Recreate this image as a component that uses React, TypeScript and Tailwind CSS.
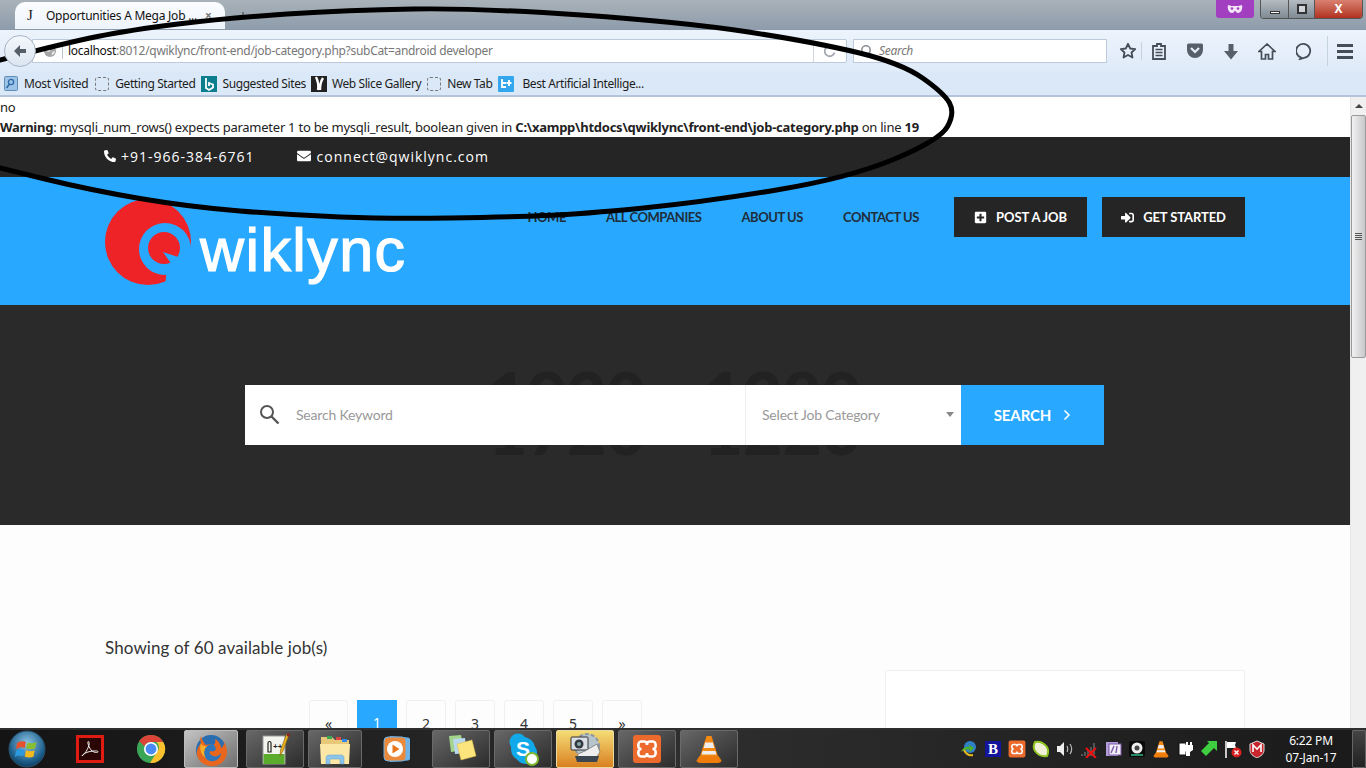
import React from "react";
import { FaPhoneAlt, FaEnvelope, FaPlusSquare, FaSignInAlt } from "react-icons/fa";

const pts: [number, number][] = [[0,60],[65,43],[130,30],[226,18],[348,10],[479,8],[683,22],[814,42],[901,63],[944,93],[955,113],[940,140],[849,178],[704,202],[583,214],[510,217],[390,219],[290,215],[190,207],[90,190],[0,168]];
function smooth(p: [number, number][]) {
  let d = `M${p[0][0]} ${p[0][1]}`;
  for (let i = 1; i < p.length - 1; i++) {
    const mx = (p[i][0] + p[i + 1][0]) / 2, my = (p[i][1] + p[i + 1][1]) / 2;
    d += ` Q${p[i][0]} ${p[i][1]} ${mx} ${my}`;
  }
  const l = p[p.length - 1];
  return d + ` L${l[0]} ${l[1]}`;
}

function Bookmark({ icon, label, className }: { icon: React.ReactNode; label: string; className?: string }) {
  return (
    <div className={"flex items-center " + (className || "gap-[6px]")}>
      {icon}
      <span className="whitespace-nowrap text-[12px] tracking-[-0.4px] text-[#1d1d1d]">{label}</span>
    </div>
  );
}
const Dashed = () => <div className="h-[14px] w-[14px] rounded-[3px] border border-dashed border-[#777]" />;

function TaskBtn({ children, active, orange, w = "w-[58px]" }: { children: React.ReactNode; active?: boolean; orange?: boolean; w?: string }) {
  const bg = active
    ? "bg-linear-to-br from-[#c4c4c4] to-[#6f6f6f] border-[#bdbdbd]"
    : orange
    ? "bg-linear-to-b from-[#f3dc74] to-[#d8801c] border-[#e9d9a0]"
    : "bg-linear-to-br from-[#686868] to-[#2c2c2c] border-[#6a6a6a]";
  return <div className={`flex h-[38px] shrink-0 items-center justify-center rounded-[2px] border ${w} ${bg}`}>{children}</div>;
}

const Vlc = ({ s = 30 }: { s?: number }) => (
  <svg className="shrink-0" width={s} height={s} viewBox="0 0 30 30">
    <path d="M12.5 2h5l7 22h-19z" fill="#f58a12" />
    <path d="M11.2 8.5h7.6l1.5 5.5H9.6zM8.6 17h12.8l1 3.4H7.6z" fill="#eee" />
    <path d="M5.5 22h19l3 4.5c0 1.5-2 2.5-3.5 2.5H6c-1.5 0-3.5-1-3.5-2.5z" fill="#ef7d0c" />
  </svg>
);
const Xampp = ({ s = 30 }: { s?: number }) => (
  <svg className="shrink-0" width={s} height={s} viewBox="0 0 30 30">
    <rect x="1" y="1" width="28" height="28" rx="3" fill="#ec6a2c" />
    <path d="M9 7.5h3.5c2 0 2.5 2.5 2.5 3.5 0-1 .5-3.5 2.5-3.5H21c2.5 0 3 3 2.5 5.5-.3 1-1 2-3 2 2 0 2.700 1 3 2 .5 2.500 0 5.500-2.500 5.500h-3.500c-2 0-2.500-2.500-2.500-3.500 0 1-.5 3.500-2.500 3.500H9c-2.500 0-3-3-2.500-5.500.3-1 1-2 3-2-2 0-2.700-1-3-2C6 10.500 6.500 7.500 9 7.500z" fill="none" stroke="#fff" strokeWidth="2.600" />
  </svg>
);

export default function App() {
  return (
    <div className="relative flex h-[768px] w-[1366px] flex-col overflow-hidden bg-white font-['Noto_Sans',sans-serif]">
      {/* Title bar */}
      <div className="flex h-[29px] shrink-0 items-start bg-linear-to-b from-[#a9b2b9] to-[#8e9cab]">
        <div className="mt-[2px] ml-[15px] flex h-[27px] w-[210px] items-center rounded-t-[10px] bg-linear-to-b from-[#fbfcfe] to-[#eef4fb] pl-[12px]">
          <span className="w-[19px] font-['Liberation_Serif',serif] text-[15px] text-[#222]">J</span>
          <span className="whitespace-nowrap text-[12px] tracking-[-0.25px] text-[#111]">Opportunities A Mega Job ...</span>
          <span className="ml-[8px] text-[12px] font-bold text-[#777]">×</span>
        </div>
        <span className="mt-[5px] ml-[14px] text-[14px] text-[#444]">+</span>
        <div className="ml-auto flex">
          <div className="flex h-[18px] w-[38px] items-center justify-center rounded-b-[3px] bg-[#a13fc0]">
            <svg width="16" height="10" viewBox="0 0 16 10"><path d="M1 1c3 1 4 1 7 1s4 0 7-1c1 4-1 8-4 8-2 0-2-2-3-2s-1 2-3 2C2 9 0 5 1 1z" fill="#f3e4f8" /><circle cx="5" cy="4.500" r="1.300" fill="#a13fc0" /><circle cx="11" cy="4.500" r="1.300" fill="#a13fc0" /></svg>
          </div>
          <div className="ml-[6px] mr-[3px] flex h-[19px] overflow-hidden rounded-b-[4px] border border-t-0 border-[#555]">
            <div className="flex w-[27px] items-end justify-center bg-linear-to-b from-[#b5bcc2] to-[#7f8a94] pb-[4px]"><div className="h-[3px] w-[10px] border border-[#333] bg-white" /></div>
            <div className="flex w-[27px] items-center justify-center border-x border-[#555] bg-linear-to-b from-[#b5bcc2] to-[#7f8a94]"><div className="h-[10px] w-[10px] border-2 border-[#333] bg-[#cfd5da]" /></div>
            <div className="flex w-[47px] items-center justify-center bg-linear-to-b from-[#d98070] to-[#b0301f] text-[12px] font-bold leading-none text-white">X</div>
          </div>
        </div>
      </div>

      {/* Nav bar */}
      <div className="flex h-[43px] shrink-0 items-center border-t border-[#8a9aab] bg-linear-to-b from-[#ecf3fc] to-[#dfeaf8] pr-[10px]">
        <div className="z-10 ml-[4px] flex h-[32px] w-[32px] shrink-0 items-center justify-center rounded-full border border-[#a8b5c4] bg-linear-to-b from-[#f4f8fc] to-[#dbe5f0]">
          <svg width="16" height="16" viewBox="0 0 16 16"><path d="M8 2L2 8l6 6V10h6V6H8z" fill="#555f69" /></svg>
        </div>
        <div className="-ml-[4px] flex h-[24px] w-[815px] items-center rounded-r-[2px] border border-[#bccada] bg-white pl-[10px]">
          <svg className="shrink-0" width="14" height="14" viewBox="0 0 14 14"><circle cx="7" cy="7" r="6" fill="#a6a6a6" /><path d="M3 4c2-2 3 0 4 1s0 3-2 3-2-3-2-4zM9 8c1-1 3-1 3 0s-2 3-3 3 0-2 0-3z" fill="#e4e4e4" /></svg>
          <div className="ml-[5px] mr-[5px] h-[16px] w-px bg-[#b9c3ce]" />
          <span className="whitespace-nowrap text-[12px] tracking-[-0.3px] text-[#777]"><span className="text-[#111]">localhost</span>:8012/qwiklync/front-end/job-category.php?subCat=android developer</span>
          <div className="ml-auto flex h-full items-center">
            <div className="h-[22px] w-px bg-[#d0d7df]" />
            <svg className="mx-[9px]" width="14" height="14" viewBox="0 0 14 14"><path d="M11.500 8.500A5 5 0 1 1 10 3.500" fill="none" stroke="#a3a9b0" strokeWidth="1.800" /><path d="M8.500 1l3.500 2.500-3 2.500z" fill="#e8e8e8" /></svg>
          </div>
        </div>
        <div className="ml-[6px] flex h-[24px] w-[254px] shrink-0 items-center border border-[#bccada] bg-white pl-[6px]">
          <svg width="14" height="14" viewBox="0 0 14 14"><circle cx="6" cy="6" r="4.200" fill="none" stroke="#8a8f95" strokeWidth="1.600" /><path d="M9 9l4 4" stroke="#8a8f95" strokeWidth="2" /></svg>
          <span className="ml-[5px] text-[12px] italic tracking-[-0.3px] text-[#777]">Search</span>
        </div>
        <div className="flex flex-1 items-center">
          <svg className="ml-[12px] shrink-0" width="18" height="18" viewBox="0 0 18 18"><path d="M9 1.800l2.200 4.700 5 .6-3.700 3.400 1 5L9 13l-4.500 2.500 1-5-3.700-3.400 5-.6z" fill="none" stroke="#444e58" strokeWidth="1.800" strokeLinejoin="round" /></svg>
          <div className="ml-[4px] h-[18px] w-px bg-[#c5d2e0]" />
          <svg className="ml-[9px] shrink-0" width="16" height="18" viewBox="0 0 16 18"><path d="M2 4h4V2h4v2h4v13H2z" fill="none" stroke="#444e58" strokeWidth="1.800" /><path d="M4.500 7.500h7M4.500 10.500h7M4.500 13.500h7" stroke="#444e58" strokeWidth="1.600" /></svg>
          <svg className="ml-[19px] shrink-0" width="18" height="16" viewBox="0 0 18 16"><path d="M1 2a1.500 1.500 0 0 1 1.500-1.500h13A1.500 1.500 0 0 1 17 2v5a8 8 0 0 1-16 0z" fill="#56606b" /><path d="M5 5l4 4 4-4" fill="none" stroke="#e6eef8" strokeWidth="2.200" /></svg>
          <svg className="ml-[20px] shrink-0" width="14" height="17" viewBox="0 0 14 17"><path d="M4.500 1h5v7H14l-7 8.500L0 8h4.500z" fill="#56606b" /></svg>
          <svg className="ml-[20px] shrink-0" width="18" height="17" viewBox="0 0 18 17"><path d="M9 1L1 8.500h2.500V16h4v-4.500h3V16h4V8.500H17z" fill="none" stroke="#444e58" strokeWidth="1.700" /></svg>
          <svg className="ml-[20px] shrink-0" width="18" height="18" viewBox="0 0 18 18"><path d="M5 15.500A7 7 0 1 1 8 15.800L4 17z" fill="none" stroke="#444e58" strokeWidth="1.800" /></svg>
          <div className="ml-[13px] h-[30px] w-px bg-[#c5d2e0]" />
          <div className="ml-[9px] flex flex-col gap-[3px]">
            <div className="h-[3px] w-[16px] bg-[#444e58]" /><div className="h-[3px] w-[16px] bg-[#444e58]" /><div className="h-[3px] w-[16px] bg-[#444e58]" />
          </div>
        </div>
      </div>

      {/* Bookmarks */}
      <div className="flex h-[25px] shrink-0 items-center border-b-2 border-[#b4c4da] bg-[#dbe8f7] pl-[4px]">
        <Bookmark icon={<svg width="14" height="15" viewBox="0 0 14 15"><rect x=".5" y=".5" width="13" height="14" rx="1" fill="#9dc3e6" stroke="#5f8db8" /><circle cx="7" cy="6" r="2.600" fill="none" stroke="#2e6aa8" strokeWidth="1.300" /><path d="M2.500 12l3-4" stroke="#2e6aa8" strokeWidth="1.500" /></svg>} label="Most Visited" />
        <div className="w-[7px]" />
        <Bookmark icon={<Dashed />} label="Getting Started" />
        <div className="w-[6px]" />
        <Bookmark className="gap-[5px]" icon={<svg width="16" height="16" viewBox="0 0 16 16"><rect width="16" height="16" fill="#0b7f8e" /><path d="M5 2v10l3 2 4-2.500V8.500L8 7v3" fill="none" stroke="#fff" strokeWidth="1.800" /></svg>} label="Suggested Sites" />
        <div className="w-[5px]" />
        <Bookmark className="gap-[5px]" icon={<svg width="16" height="16" viewBox="0 0 16 16"><rect width="16" height="16" fill="#222" /><path d="M5 1c2 4 3 7 2 13M12 2c-2 3-3 7-3 12" stroke="#fff" strokeWidth="2.400" fill="none" /></svg>} label="Web Slice Gallery" />
        <div className="w-[6px]" />
        <Bookmark icon={<Dashed />} label="New Tab" />
        <div className="w-[6px]" />
        <Bookmark className="gap-[8px]" icon={<svg width="16" height="16" viewBox="0 0 16 16"><rect width="16" height="16" rx="1" fill="#34a6ee" /><path d="M4 3v8h4M4 7h4M11 4v6M8.500 7h5" stroke="#fff" strokeWidth="1.800" fill="none" /></svg>} label="Best Artificial Intellige..." />
      </div>

      {/* Page + scrollbar */}
      <div className="flex min-h-0 flex-1">
        <div className="flex min-w-0 flex-1 flex-col overflow-hidden bg-[#fdfdfd]">
          <div className="h-[40px] shrink-0 bg-white text-[13px] leading-[20px] tracking-[-0.25px] text-[#222]">
            <div>no</div>
            <div className="whitespace-nowrap"><b>Warning</b>: mysqli_num_rows() expects parameter 1 to be mysqli_result, boolean given in <b>C:\xampp\htdocs\qwiklync\front-end\job-category.php</b> on line <b>19</b></div>
          </div>
          <div className="flex h-[40px] shrink-0 items-center bg-[#252525] pb-[2px] pl-[104px] font-['Open_Sans',sans-serif] text-[14px] tracking-[1px] text-white">
            <FaPhoneAlt className="mr-[5px] text-[12px]" />
            <span>+91-966-384-6761</span>
            <FaEnvelope className="mr-[6px] ml-[42px] text-[14px]" />
            <span>connect@qwiklync.com</span>
          </div>
          <div className="flex h-[128px] shrink-0 items-start bg-[#29a8ff] px-[105px]">
            <div className="flex items-start">
              <svg className="mt-[21px] shrink-0" width="88" height="88" viewBox="0 0 88 88">
                <circle cx="43" cy="44" r="43" fill="#ed2328" />
                <path d="M60 88h28V50L62 70z" fill="#29a8ff" />
                <circle cx="60" cy="51" r="26" fill="#29a8ff" />
                <circle cx="59" cy="50" r="16" fill="#ed2328" />
                <path d="M58 54l15 5 2 6-8 2z" fill="#29a8ff" />
              </svg>
              <span className="mt-[38px] ml-[7px] font-['Liberation_Sans',sans-serif] text-[61px] leading-[70px] tracking-[1.4px] text-white [-webkit-text-stroke:1.2px_white]">wiklync</span>
            </div>
            <div className="ml-auto flex items-center pt-[20px] font-['Lato',sans-serif] text-[13px] font-bold tracking-[-0.45px] text-[#1f2d3a]">
              <span className="pt-[2px]">HOME</span>
              <span className="ml-[40px] pt-[2px]">ALL COMPANIES</span>
              <span className="ml-[40px] pt-[2px]">ABOUT US</span>
              <span className="ml-[40px] pt-[2px]">CONTACT US</span>
              <div className="ml-[35px] flex h-[40px] w-[133px] items-center justify-center gap-[9px] bg-[#252525] tracking-[-0.1px] text-white"><FaPlusSquare className="text-[13px]" /><span className="pt-[2px]">POST A JOB</span></div>
              <div className="ml-[15px] flex h-[40px] w-[143px] items-center justify-center gap-[9px] bg-[#252525] tracking-[-0.1px] text-white"><FaSignInAlt className="text-[13px]" /><span className="pt-[2px]">GET STARTED</span></div>
            </div>
          </div>
          <div className="relative flex h-[220px] shrink-0 items-center bg-[#2a2a2a] pl-[245px]">
            <div className="absolute top-[57px] left-[488px] font-['Lato',sans-serif] text-[68px] leading-[68px] font-black whitespace-nowrap text-[#222222]">1920 - 1280</div>
            <div className="absolute top-[90px] left-[488px] font-['Lato',sans-serif] text-[68px] leading-[68px] font-black whitespace-nowrap text-[#222222]">1720 - 1220</div>
            <div className="relative flex h-[60px] w-[859px] bg-white font-['Lato',sans-serif] text-[14px] tracking-[-0.2px] text-[#999]">
              <div className="flex w-[501px] items-center border-r border-[#eeeeee] pb-[1px] pl-[14px]">
                <svg className="shrink-0" width="21" height="21" viewBox="0 0 21 21"><circle cx="8" cy="8" r="6" fill="none" stroke="#555" strokeWidth="2" /><path d="M12.500 12.500L19.500 19.500" stroke="#555" strokeWidth="2.400" /></svg>
                <span className="ml-[16px]">Search Keyword</span>
              </div>
              <div className="flex w-[215px] items-center pr-[7px] pb-[1px] pl-[16px]">
                <span>Select Job Category</span>
                <div className="ml-auto h-0 w-0 border-x-[4px] border-t-[5px] border-x-transparent border-t-[#888]" />
              </div>
              <div className="flex w-[143px] items-center justify-center gap-[12px] bg-[#29a8ff] text-[15px] font-bold tracking-[-0.1px] text-white">
                SEARCH
                <svg width="8" height="12" viewBox="0 0 8 12"><path d="M1.500 1.500L6 6l-4.500 4.500" fill="none" stroke="#fff" strokeWidth="1.500" /></svg>
              </div>
            </div>
          </div>
          <div className="flex flex-1 overflow-hidden px-[105px]">
            <div className="w-[780px] shrink-0">
              <div className="mt-[110px] font-['Lato',sans-serif] text-[17px] leading-[26px] tracking-[0.1px] text-[#333]">Showing of 60 available job(s)</div>
              <div className="mt-[39px] ml-[204px] flex gap-[9px] text-[14px] text-[#333]">
                {["«", "1", "2", "3", "4", "5", "»"].map((t) => (
                  <div key={t} className={t === "1" ? "flex h-[60px] w-[40px] shrink-0 justify-center bg-[#29a8ff] pt-[12px] text-white" : t === "«" ? "flex h-[60px] w-[39px] shrink-0 justify-center rounded-[3px] border border-[#f0f0f0] pt-[12px]" : "flex h-[60px] w-[40px] shrink-0 justify-center rounded-[3px] border border-[#f0f0f0] pt-[12px]"}>{t}</div>
                ))}
              </div>
            </div>
            <div className="mt-[145px] h-[300px] w-[360px] shrink-0 rounded-[2px] border border-[#f0f0f0] bg-white" />
          </div>
        </div>
        <div className="flex w-[16px] shrink-0 flex-col items-center border-l border-[#e5e5e5] bg-[#f0f0f0]">
          <div className="flex h-[18px] items-center justify-center"><div className="h-0 w-0 border-x-[4px] border-b-[4px] border-x-transparent border-b-[#444]" /></div>
          <div className="flex h-[243px] w-[15px] flex-col items-center justify-center gap-[1px] rounded-[2px] border border-[#9a9a9a] bg-linear-to-r from-[#f2f2f2] to-[#c8c8cc]">
            <div className="h-px w-[7px] bg-[#555]" /><div className="h-px w-[7px] bg-[#555]" /><div className="h-px w-[7px] bg-[#555]" /><div className="h-px w-[7px] bg-[#555]" />
          </div>
        </div>
      </div>

      {/* Taskbar */}
      <div className="flex h-[40px] shrink-0 items-center border-t-2 border-[#2e2e2e] bg-linear-to-r from-[#141414] via-[#2e2e2e] to-[#1a1a1a]">
        <svg className="ml-[8px] shrink-0" width="38" height="38" viewBox="0 0 38 38">
          <defs><radialGradient id="o" cx=".5" cy=".35" r=".7"><stop offset="0" stopColor="#8fc6e8" /><stop offset=".7" stopColor="#1d5f8c" /><stop offset="1" stopColor="#0d3350" /></radialGradient></defs>
          <circle cx="19" cy="19" r="18" fill="url(#o)" stroke="#29536f" />
          <path d="M9 13c3-2 6-2 9-1l-1.300 6c-3-1-5-1-8.700 1z" fill="#e5522b" />
          <path d="M19.500 12.500c3 1 6 1 9-.5l-1.500 6.500c-3 1.200-6 1-9-.3z" fill="#8bbf32" />
          <path d="M8.300 20.500c3-1.500 6-1.500 8.200-.6l-1.300 6.300c-3-1-5-1-8.500.7z" fill="#2c9ae0" />
          <path d="M18 20.300c3 1.200 6 1.200 8.700 0l-1.300 6.500c-3 1.200-6 1-8.700-.2z" fill="#f4b91c" />
        </svg>
        <div className="ml-[30px] flex h-[28px] w-[28px] shrink-0 items-center justify-center border-[3px] border-[#e01b12] bg-[#2a0605]">
          <svg width="20" height="20" viewBox="0 0 20 20"><path d="M2 17c3-2 6-7 7-11 .4-2 0-4-.8-3.500C7 3 9 9 12 12c2 1.500 6 2 6 .8 0-1.500-6-1-10 .2-3 1-6 3-6 4z" fill="none" stroke="#eee" strokeWidth="1" /></svg>
        </div>
        <svg className="ml-[32px] shrink-0" width="30" height="30" viewBox="0 0 32 32">
          <circle cx="16" cy="16" r="15" fill="#3aa655" />
          <path d="M16 1a15 15 0 0 1 13 7.500H16a7.500 7.500 0 0 0-7 4.500L3.300 7.500A15 15 0 0 1 16 1z" fill="#dc4437" />
          <path d="M29 8.500A15 15 0 0 1 15 31l6.800-11a7.500 7.500 0 0 0 0-11.500z" fill="#fbc02d" />
          <circle cx="16" cy="16" r="7.500" fill="#fff" /><circle cx="16" cy="16" r="5.800" fill="#4a8af4" />
        </svg>
        <div className="ml-[18px]"><TaskBtn active w="w-[54px]">
          <svg width="36" height="36" viewBox="0 0 36 36">
            <circle cx="18" cy="19" r="15" fill="#2a6db0" />
            <path d="M8 5c-1 3-1 5 0 7C5 16 3 20 4 24c2 8 9 11 15 11 9 0 15-7 15-14 0-4-1-7-3-10 0 3-1 5-3 6 0-3-2-7-6-9 1 3 0 5-2 6-2-1-5-1-7 0-2-2-4-5-5-9z" fill="#e8661d" />
            <path d="M20 13c-4 0-9 3-9 9s5 9 10 8c4-1 7-4 7-8-2 3-5 4-8 3s-4-3-3-5c3 1 5 0 6-2-1-3-2-4-3-5z" fill="#2f77bd" />
            <path d="M8 12c1 3 3 3 6 3-3 3-4 8-1 12-5-3-7-9-5-15z" fill="#f6b02a" />
          </svg>
        </TaskBtn></div>
        <div className="ml-[8px]"><TaskBtn>
          <svg width="34" height="34" viewBox="0 0 34 34">
            <rect x="5" y="4" width="22" height="28" fill="#f4f4ee" stroke="#999" />
            <rect x="5.500" y="22" width="21" height="10" fill="#5bab2c" />
            <path d="M10 20v-9c0-2 3-2 3 0v9z" fill="none" stroke="#222" strokeWidth="1.200" />
            <text x="15" y="17" fontSize="8" fontWeight="bold" fill="#222" fontFamily="'Liberation Sans',sans-serif">++</text>
            <path d="M31 3l-6 16-3 5 .5-6 6-16z" fill="#e9b21f" stroke="#7a5a10" strokeWidth=".6" />
            <circle cx="30.500" cy="3" r="1.800" fill="#8a2a2a" />
          </svg>
        </TaskBtn></div>
        <div className="ml-[4px]"><TaskBtn w="w-[54px]">
          <svg width="34" height="34" viewBox="0 0 34 34">
            <path d="M3 5h11l3 3h14v22H3z" fill="#e8c97a" />
            <rect x="9" y="4" width="5" height="3" fill="#3aa655" /><rect x="18" y="5" width="5" height="3" fill="#d44" /><rect x="24" y="7" width="5" height="3" fill="#38e" />
            <path d="M2 12h30l-1 20H3z" fill="#fbe8a6" />
            <path d="M8 32v-6c0-2 1-3 3-3h12c2 0 3 1 3 3v6h-4v-5H12v5z" fill="#8cc4ea" stroke="#6a9fc4" strokeWidth=".5" />
          </svg>
        </TaskBtn></div>
        <div className="ml-[8px] flex w-[54px] shrink-0 justify-center">
          <svg width="30" height="30" viewBox="0 0 30 30">
            <path d="M8 2l18 1.500c1 0 2 1 2 2v19c0 1-1 2-2 2L8 28z" fill="#6fb2e6" />
            <rect x="2" y="3" width="22" height="24" rx="4" fill="#e98a3c" stroke="#6fb2e6" />
            <circle cx="13" cy="15" r="8" fill="#fff" /><path d="M10.500 10.500l7 4.500-7 4.500z" fill="#e8761c" />
          </svg>
        </div>
        <div className="ml-[8px]"><TaskBtn>
          <svg width="34" height="34" viewBox="0 0 34 34">
            <path d="M5 4l12-1 3 15-13 2z" fill="#a4d48c" /><path d="M9 7l12-1 2 15-12 1z" fill="#b8d8f0" />
            <path d="M13 12l15-4 4 16-15 4z" fill="#fbe57c" stroke="#d8b840" strokeWidth=".5" />
          </svg>
        </TaskBtn></div>
        <div className="ml-[4px]"><TaskBtn>
          <svg width="34" height="34" viewBox="0 0 34 34">
            <circle cx="12" cy="10" r="8.500" fill="#12a9ea" /><circle cx="20" cy="21" r="11" fill="#12a9ea" /><circle cx="17" cy="17" r="12" fill="#12a9ea" />
            <text x="17" y="24" textAnchor="middle" fontSize="21" fontWeight="bold" fill="#fff" fontFamily="'Liberation Sans',sans-serif">S</text>
            <circle cx="26" cy="27" r="6" fill="#fff" stroke="#7fb82e" strokeWidth="2" />
          </svg>
        </TaskBtn></div>
        <div className="ml-[4px]"><TaskBtn orange>
          <svg width="36" height="36" viewBox="0 0 36 36">
            <circle cx="20" cy="15" r="12" fill="#b8c4cc" stroke="#8a98a4" strokeWidth="2" strokeDasharray="4 2" />
            <rect x="4" y="6" width="17" height="13" rx="1" fill="#d9dfe4" stroke="#333" />
            <circle cx="12" cy="13" r="4.500" fill="#33393f" /><circle cx="12" cy="13" r="2" fill="#8aa" />
            <path d="M18 20l12-7 3 8-4 6H10l1-4z" fill="#eee" stroke="#555" strokeWidth=".6" />
            <path d="M8 25h24l-2 6H10z" fill="#3b4650" />
          </svg>
        </TaskBtn></div>
        <div className="ml-[4px]"><TaskBtn><Xampp /></TaskBtn></div>
        <div className="ml-[4px]"><TaskBtn><Vlc /></TaskBtn></div>

        <div className="ml-[222px] flex shrink-0 items-center gap-[6px] [&>*]:shrink-0">
          <svg width="18" height="18" viewBox="0 0 18 18"><circle cx="10" cy="7" r="6" fill="#2f7fc9" /><path d="M1 12c2-5 5-6 9-5l-2-3 6 4-5 5 1-3c-3-1-6 0-9 2z" fill="#4caf2e" /><path d="M4 10c2 4 5 6 9 5" stroke="#e9b81f" strokeWidth="2" fill="none" /></svg>
          <div className="mx-[1px] flex h-[16px] w-[16px] items-center justify-center bg-[#14149a] font-['Liberation_Serif',serif] text-[15px] font-bold text-white">B</div>
          <Xampp s={18} />
          <svg width="18" height="18" viewBox="0 0 18 18"><path d="M3 2c5-1 9 1 12 5 2 4 1 7 0 9-5 1-9-1-12-5C1 8 2 4 3 2z" fill="#f0f0d8" stroke="#8cc21f" strokeWidth="2" /></svg>
          <svg width="18" height="18" viewBox="0 0 18 18"><path d="M1 6h3l4-4v14l-4-4H1z" fill="#eee" /><path d="M11 6c1 2 1 4 0 6M14 4c2 3 2 7 0 10" stroke="#bbb" strokeWidth="1.200" fill="none" /></svg>
          <svg width="18" height="18" viewBox="0 0 18 18"><path d="M1 14h2v2H1zM4 12h2v4H4zM7 10h2v6H7zM10 7h2v9h-2zM13 3h2v13h-2z" fill="#555" /><path d="M6 8l10 10M16 8L6 18" stroke="#e11" strokeWidth="2" /></svg>
          <svg width="18" height="18" viewBox="0 0 18 18"><rect x="2" y="2" width="12" height="14" fill="#b39ddb" /><rect x="5" y="4" width="12" height="11" fill="#f2eef8" stroke="#7d5ba6" /><path d="M10 6l-3 7M13 6l-1 7" stroke="#7d5ba6" strokeWidth="1.400" /></svg>
          <svg width="18" height="18" viewBox="0 0 18 18"><rect x="1" y="1" width="16" height="16" rx="2" fill="#0a0a0a" /><circle cx="9" cy="8" r="5.500" fill="#eee" /><circle cx="9" cy="8" r="2.500" fill="#444" /><path d="M3 15h12" stroke="#3b8" strokeWidth="1.500" /></svg>
          <Vlc s={18} />
          <svg width="18" height="18" viewBox="0 0 18 18"><path d="M3 3h7v12H3z" fill="#fff" stroke="#111" /><path d="M8 5h2V2h2v3h2V2h2v3h1v5l-3 2v4h-4v-4L8 10z" fill="#fff" /></svg>
          <svg width="18" height="18" viewBox="0 0 18 18"><path d="M7 1h10v10l-3-3-8 8-5-5 8-8z" fill="#3fce3f" /></svg>
          <svg width="18" height="18" viewBox="0 0 18 18"><path d="M2 1v17" stroke="#fff" strokeWidth="1.500" /><path d="M3 2h9l-1 3 1 3H3z" fill="#fff" /><circle cx="12.500" cy="12.500" r="5" fill="#d92020" /><path d="M10.500 10.500l4 4M14.500 10.500l-4 4" stroke="#fff" strokeWidth="1.400" /></svg>
          <svg width="18" height="18" viewBox="0 0 18 18"><path d="M9 1l7 3v6c0 4-3 6-7 8-4-2-7-4-7-8V4z" fill="#c8262c" stroke="#ddd" /><path d="M5 12V5l4 4 4-4v7" stroke="#fff" strokeWidth="1.600" fill="none" /></svg>
        </div>
        <div className="ml-[5px] flex w-[80px] shrink-0 flex-col items-center text-[12px] leading-[17px] tracking-[-0.2px] text-white">
          <span>6:22 PM</span>
          <span>07-Jan-17</span>
        </div>
        <div className="ml-auto h-full w-[14px] rounded-[1px] border border-[#666] bg-linear-to-b from-[#444] to-[#222]" />
      </div>

      {/* Hand-drawn annotation over the screenshot */}
      <svg className="pointer-events-none absolute top-0 left-0" width="1366" height="240" viewBox="0 0 1366 240">
        <path d={smooth(pts)} fill="none" stroke="#000" strokeWidth="5" strokeLinecap="round" strokeLinejoin="round" />
      </svg>
    </div>
  );
}
